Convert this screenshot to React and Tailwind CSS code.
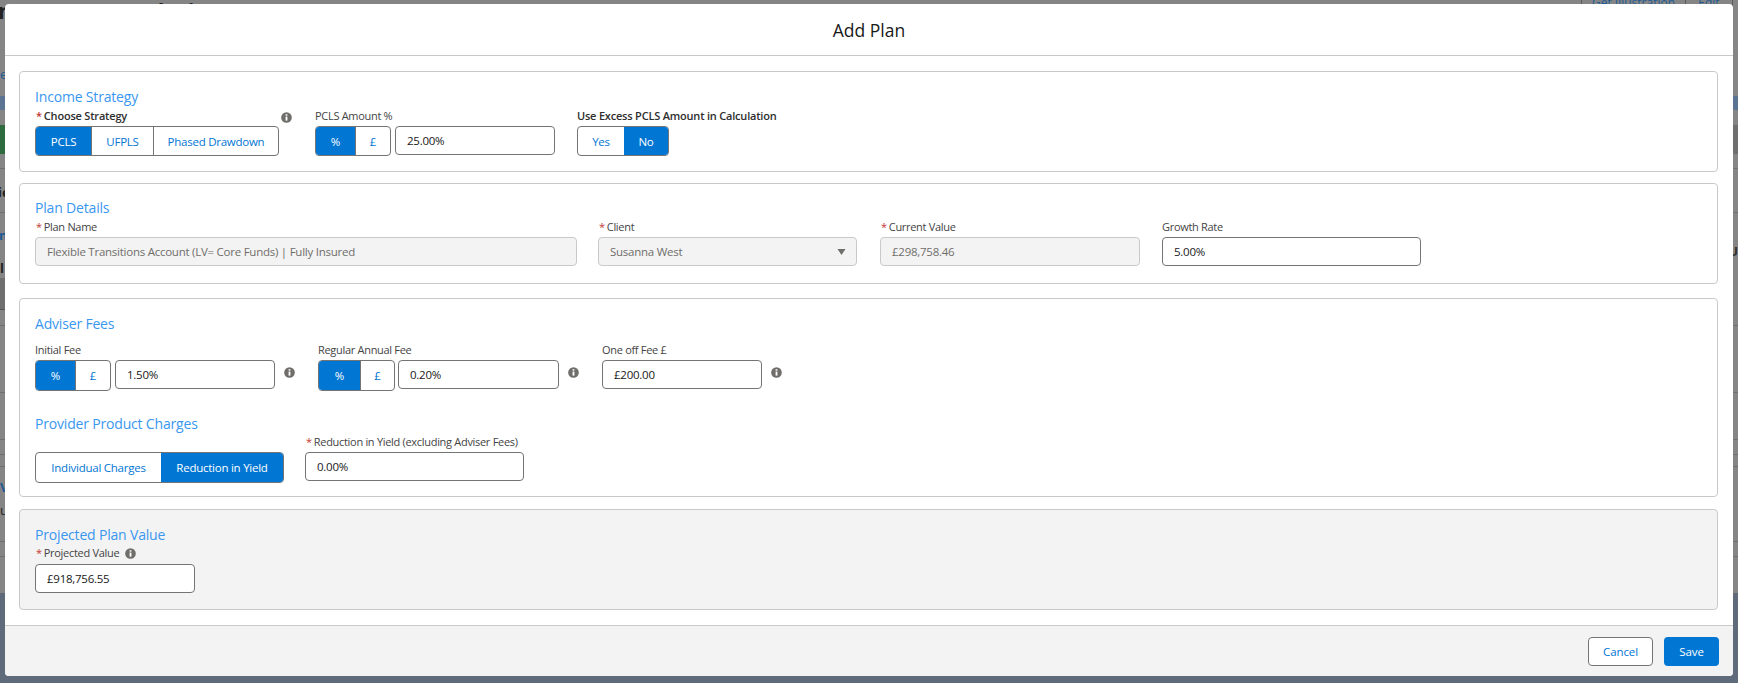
const FONT = "font-['Open_Sans','Noto_Sans',sans-serif]";

function Info({ className = "" }) {
  return (
    <svg viewBox="0 0 12 12" className={`w-[11px] h-[11px] shrink-0 ${className}`}>
      <circle cx="6" cy="6" r="5.8" fill="#706e6b" />
      <rect x="5" y="2.4" width="2" height="1.6" fill="#fff" />
      <rect x="5" y="5" width="2" height="4.4" fill="#fff" />
    </svg>
  );
}

function Label({ required, bold, children, className = "" }) {
  return (
    <div className={`h-[14px] flex items-center text-[11px] leading-[14px] whitespace-nowrap ${bold ? "font-semibold text-[#2e2e2e] tracking-[-0.2px]" : "text-[#444444] tracking-[-0.3px]"} ${className}`}>
      {required && <span className="text-[#c23934] mr-[2px] ml-[1px]">*</span>}
      {children}
    </div>
  );
}

function Seg({ items, active, className = "" }) {
  return (
    <div className={`flex border border-[#747474] rounded-[4px] overflow-hidden bg-white text-[11.5px] tracking-[-0.25px] shrink-0 ${className}`}>
      {items.map((it, i) => (
        <div
          key={it.t}
          className={`flex items-center justify-center pt-[1px] ${it.w} ${i > 0 ? "border-l border-[#747474]" : ""} ${i === active ? "bg-[#0176d3] text-white border-l-0" : "text-[#0176d3]"}`}
        >
          {it.t}
        </div>
      ))}
    </div>
  );
}

function Input({ value, disabled, className = "", children }) {
  return (
    <div className={`h-[29px] flex items-center justify-between pl-[11px] pr-[10px] rounded-[4px] border text-[11.5px] tracking-[-0.25px] shrink-0 ${disabled ? "bg-[#f3f3f3] border-[#c9c9c9] text-[#706e6b]" : "bg-white border-[#747474] text-[#181818]"} ${className}`}>
      <span>{value}</span>
      {children}
    </div>
  );
}

function Title({ children, className = "" }) {
  return <div className={`text-[14px] leading-[20px] tracking-[-0.18px] text-[#3a97ef] ${className}`}>{children}</div>;
}

function Card({ className = "", children }) {
  return <section className={`border border-[#c9c9c9] rounded-[4px] pl-[15px] ${className}`}>{children}</section>;
}

function Backdrop() {
  return (
    <div className={`absolute inset-0 flex flex-col bg-[#858585] text-[13px] ${FONT}`}>
      <div className="h-[68px] flex justify-between items-start">
        <div className="-mt-[4px] -ml-[2px] text-[22px] leading-[28px] font-bold text-[#222222] whitespace-nowrap">nt Income Analysis Report</div>
        <div className="flex h-[16px] -mt-[7px] mr-[5px] text-[#1d5a94] text-[12px] leading-[20px]">
          <div className="w-[105px] border-x border-[#5a5a5a] text-center">Get Illustration</div>
          <div className="w-[47px] border-r border-[#5a5a5a] text-center">Edit</div>
        </div>
      </div>
      <div className="h-[28px] text-[#1d5a94] leading-[12px]">es</div>
      <div className="h-[14px] bg-[#5c7491]" />
      <div className="h-[15px]" />
      <div className="h-[29px] flex justify-between">
        <div className="w-[5px] bg-[#2e6b3f]" />
        <div className="w-[20px] bg-[#6f6f6f]" />
      </div>
      <div className="h-[15px] border-b border-[#6f6f6f]" />
      <div className="h-[44px] border-b border-[#6f6f6f] pt-[14px] text-[#222222] font-bold -ml-[2px]">ie</div>
      <div className="h-[32px] flex items-end justify-between text-[#1d5a94] font-bold">
        <span className="-ml-[1px]">n</span>
        <span className="text-[#33302a] mb-[-16px]">U</span>
      </div>
      <div className="h-[33px] text-[#222222] pt-[14px] font-bold">l</div>
      <div className="h-[32px] flex justify-start">
        <div className="w-[5px] h-full bg-[#6f6f6f] border-b border-[#555555]" />
      </div>
      <div className="h-[16px] border-b border-[#6f6f6f]" />
      <div className="h-[67px] border-b border-[#6f6f6f]" />
      <div className="h-[47px] border-b border-[#6f6f6f]" />
      <div className="h-[15px] border-b border-[#6f6f6f]" />
      <div className="h-[12px] border-b border-[#6f6f6f]" />
      <div className="h-[33px] text-[#1d5a94] leading-[40px] font-bold">V</div>
      <div className="h-[41px] text-[#222222] leading-[20px]">u</div>
      <div className="h-[15px] border-t border-[#6f6f6f]" />
      <div className="h-[37px] border-t border-[#6f6f6f]" />
      <div className="flex-1 bg-[#5f6b7a]" />
    </div>
  );
}

export default function App() {
  return (
    <div className="relative w-[1738px] h-[683px] overflow-hidden">
      <Backdrop />
      <div className={`absolute left-[5px] top-[4px] w-[1728px] h-[672px] bg-white rounded-[4px] flex flex-col text-[#181818] ${FONT}`}>
        <header className="h-[52px] shrink-0 border-b border-[#c9c9c9] flex items-center justify-center text-[17.5px] pt-[1px]">Add Plan</header>

        <div className="flex-1 pt-[15px] pl-[14px] pr-[15px] flex flex-col">
          <Card className="h-[101px] pt-[15px]">
            <Title>Income Strategy</Title>
            <div className="flex mt-[2px]">
              <div className="relative w-[280px] shrink-0">
                <Label required bold>Choose Strategy</Label>
                <Seg
                  className="mt-[3px] h-[30px] w-[244px]"
                  active={0}
                  items={[{ t: "PCLS", w: "w-[55px]" }, { t: "UFPLS", w: "w-[62px]" }, { t: "Phased Drawdown", w: "flex-1" }]}
                />
                <Info className="absolute left-[246px] top-[3px]" />
              </div>
              <div className="w-[262px] shrink-0">
                <Label>PCLS Amount %</Label>
                <div className="flex mt-[3px]">
                  <Seg className="h-[30px] w-[76px]" active={0} items={[{ t: "%", w: "w-[39px]" }, { t: "£", w: "flex-1" }]} />
                  <Input value="25.00%" className="ml-[4px] w-[160px]" />
                </div>
              </div>
              <div>
                <Label bold>Use Excess PCLS Amount in Calculation</Label>
                <Seg className="mt-[3px] h-[30px] w-[92px]" active={1} items={[{ t: "Yes", w: "w-[46px]" }, { t: "No", w: "flex-1" }]} />
              </div>
            </div>
          </Card>

          <Card className="h-[101px] mt-[11px] pt-[14px]">
            <Title>Plan Details</Title>
            <div className="flex mt-[2px]">
              <div className="w-[542px]">
                <Label required>Plan Name</Label>
                <Input disabled value="Flexible Transitions Account (LV= Core Funds) | Fully Insured" className="mt-[3px]" />
              </div>
              <div className="w-[259px] ml-[21px]">
                <Label required>Client</Label>
                <Input disabled value="Susanna West" className="mt-[3px]">
                  <svg viewBox="0 0 8 6" className="w-[9px] h-[6px]"><path d="M0 0h8L4 6z" fill="#706e6b" /></svg>
                </Input>
              </div>
              <div className="w-[260px] ml-[23px]">
                <Label required>Current Value</Label>
                <Input disabled value="£298,758.46" className="mt-[3px]" />
              </div>
              <div className="w-[259px] ml-[22px]">
                <Label>Growth Rate</Label>
                <Input value="5.00%" className="mt-[3px]" />
              </div>
            </div>
          </Card>

          <Card className="h-[199px] mt-[14px] pt-[15px]">
            <Title>Adviser Fees</Title>
            <div className="flex mt-[9px]">
              <div className="w-[283px] shrink-0">
                <Label>Initial Fee</Label>
                <div className="flex items-start mt-[3px]">
                  <Seg className="h-[31px] w-[76px]" active={0} items={[{ t: "%", w: "w-[39px]" }, { t: "£", w: "flex-1" }]} />
                  <Input value="1.50%" className="ml-[4px] w-[160px]" />
                  <Info className="ml-[9px] mt-[7px]" />
                </div>
              </div>
              <div className="w-[284px] shrink-0">
                <Label>Regular Annual Fee</Label>
                <div className="flex items-start mt-[3px]">
                  <Seg className="h-[31px] w-[77px]" active={0} items={[{ t: "%", w: "w-[41px]" }, { t: "£", w: "flex-1" }]} />
                  <Input value="0.20%" className="ml-[3px] w-[161px]" />
                  <Info className="ml-[9px] mt-[7px]" />
                </div>
              </div>
              <div>
                <Label>One off Fee £</Label>
                <div className="flex items-start mt-[3px]">
                  <Input value="£200.00" className="w-[160px]" />
                  <Info className="ml-[9px] mt-[7px]" />
                </div>
              </div>
            </div>
            <Title className="mt-[23px]">Provider Product Charges</Title>
            <div className="flex items-end mt-[1px]">
              <Seg className="h-[31px] w-[249px]" active={1} items={[{ t: "Individual Charges", w: "w-[125px]" }, { t: "Reduction in Yield", w: "flex-1" }]} />
              <div className="ml-[21px] pb-[2px]">
                <Label required>Reduction in Yield (excluding Adviser Fees)</Label>
                <Input value="0.00%" className="mt-[3px] w-[219px]" />
              </div>
            </div>
          </Card>

          <Card className="h-[101px] mt-[12px] pt-[15px] bg-[#f3f3f3]">
            <Title>Projected Plan Value</Title>
            <Label required className="mt-[1px]">
              Projected Value
              <Info className="ml-[6px]" />
            </Label>
            <Input value="£918,756.55" className="mt-[4px] w-[160px]" />
          </Card>
        </div>

        <footer className="h-[51px] shrink-0 border-t border-[#c9c9c9] bg-[#f3f3f3] rounded-b-[4px] flex justify-end items-start pt-[11px] pr-[14px] gap-[11px] text-[11.5px] tracking-[-0.1px]">
          <div className="w-[65px] h-[29px] flex items-center justify-center rounded-[4px] border border-[#747474] bg-white text-[#0176d3]">Cancel</div>
          <div className="w-[55px] h-[29px] flex items-center justify-center rounded-[4px] bg-[#0176d3] text-white">Save</div>
        </footer>
      </div>
    </div>
  );
}
